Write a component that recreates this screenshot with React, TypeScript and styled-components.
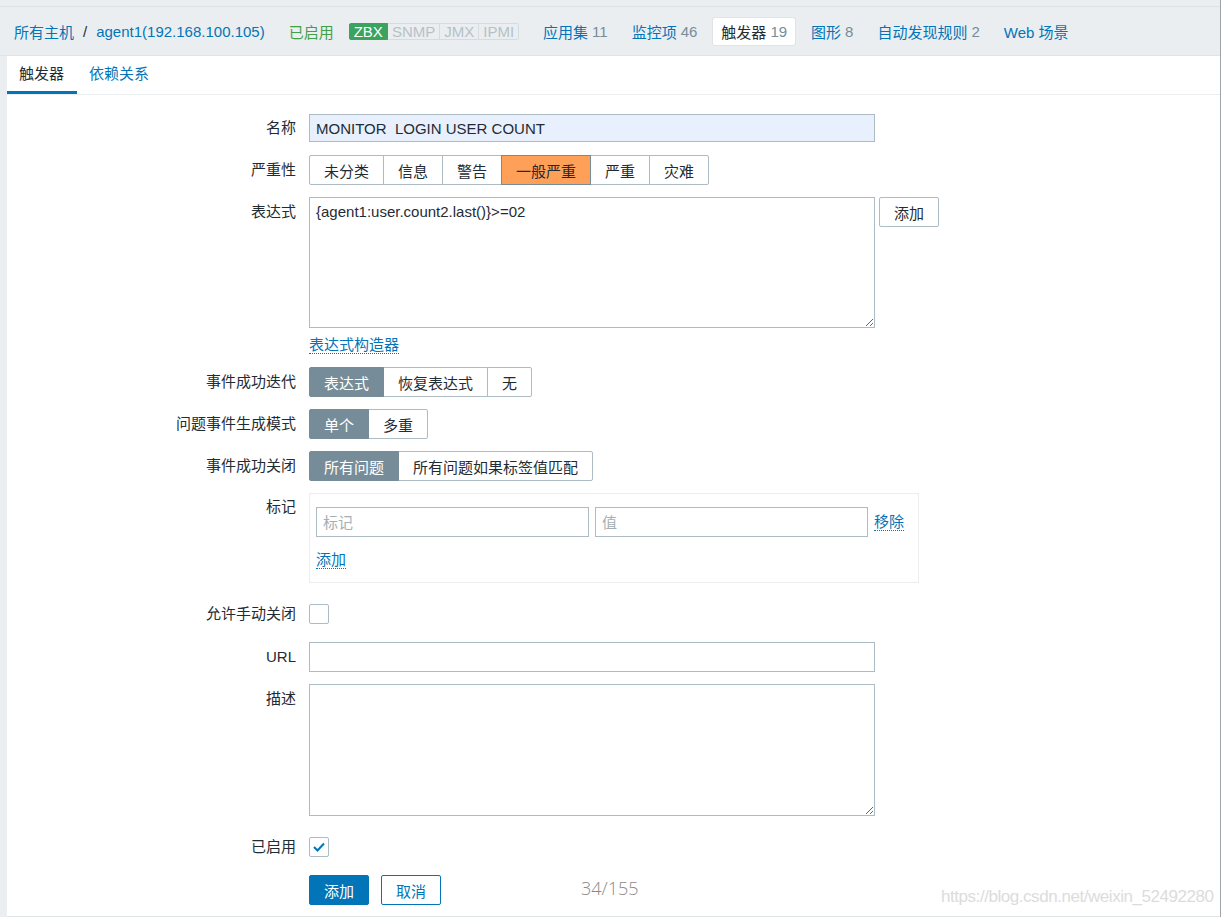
import styled, { createGlobalStyle } from 'styled-components';

const COLORS = {
  bg: '#ebeef0',
  text: '#1f2c33',
  link: '#0275b8',
  muted: '#768d99',
  border: '#acbbc4',
  light: '#dfe4e7',
  green: '#429e47',
  orange: '#ffa059',
};

const GlobalStyle = createGlobalStyle`
  html, body {
    margin: 0;
    padding: 0;
    background: ${COLORS.bg};
  }
  body {
    font-family: "Liberation Sans", "Noto Sans CJK SC", sans-serif;
    font-size: 15px;
    color: ${COLORS.text};
  }
`;

const Page = styled.div`
  position: relative;
  width: 1221px;
  height: 917px;
  box-sizing: border-box;
  background: ${COLORS.bg};
  border-right: 1px solid #9ea5aa;
  overflow: hidden;
`;

const Header = styled.div`
  display: flex;
  align-items: center;
  height: 48px;
  margin-top: 6px;
  padding-left: 14px;
  border-top: 1px solid #dde2e5;
  border-bottom: 1px solid ${COLORS.light};
  white-space: nowrap;
`;

const Crumb = styled.a`
  color: ${COLORS.link};
  text-decoration: none;
`;

const Sep = styled.span`
  margin: 0 9px;
  color: ${COLORS.text};
`;

const Status = styled.span`
  color: ${COLORS.green};
  margin-left: 24px;
`;

const Badges = styled.div`
  display: flex;
  margin-left: 15px;
  margin-right: 16px;
  height: 17px;
`;

const Badge = styled.span<{ $on?: boolean }>`
  display: flex;
  align-items: center;
  padding: 0 4px;
  line-height: 15px;
  border: 1px solid ${(p) => (p.$on ? '#3aa35d' : '#d5dce0')};
  border-left-width: ${(p) => (p.$on ? '1px' : '0')};
  background: ${(p) => (p.$on ? '#3aa35d' : COLORS.bg)};
  color: ${(p) => (p.$on ? '#fff' : '#b6c1c7')};
  border-radius: ${(p) => (p.$on ? '2px 0 0 2px' : '0')};
  &:last-child {
    border-radius: 0 2px 2px 0;
  }
`;

const Tabs = styled.div`
  display: flex;
  gap: 8px;
`;

const Tab = styled.a<{ $active?: boolean }>`
  display: flex;
  align-items: center;
  height: 27px;
  padding: 0 8px;
  border-radius: 2px;
  text-decoration: none;
  color: ${(p) => (p.$active ? COLORS.text : COLORS.link)};
  background: ${(p) => (p.$active ? '#fff' : 'transparent')};
  box-shadow: ${(p) => (p.$active ? `0 0 0 1px ${COLORS.light}` : 'none')};
`;

const Count = styled.span`
  color: ${COLORS.muted};
  margin-left: 4px;
`;

const Panel = styled.div`
  margin-left: 7px;
  height: 860px;
  background: #fff;
  border-bottom: 1px solid #dfe4e7;
`;

const SubTabs = styled.div`
  display: flex;
  height: 38px;
  border-bottom: 1px solid ${COLORS.bg};
`;

const SubTab = styled.a<{ $active?: boolean }>`
  display: flex;
  align-items: center;
  padding: 0 13px 2px 12px;
  text-decoration: none;
  color: ${(p) => (p.$active ? COLORS.text : COLORS.link)};
  border-bottom: 3px solid ${(p) => (p.$active ? COLORS.link : 'transparent')};
  box-sizing: border-box;
`;

const Form = styled.div`
  display: flex;
  flex-direction: column;
  gap: 12px;
  padding-top: 19px;
`;

const Row = styled.div<{ $check?: boolean; $extra?: number }>`
  display: grid;
  grid-template-columns: 289px auto;
  column-gap: 13px;
  align-items: ${(p) => (p.$check ? 'center' : 'start')};
  padding: ${(p) => (p.$check ? '9px 0 6px' : '0')};
  margin-bottom: ${(p) => p.$extra ?? 0}px;
`;

const Label = styled.div<{ $h?: number }>`
  text-align: right;
  line-height: ${(p) => p.$h ?? 30}px;
  white-space: nowrap;
`;

const Field = styled.div`
  display: flex;
  align-items: flex-start;
  gap: 4px;
`;

const Column = styled.div`
  display: flex;
  flex-direction: column;
  align-items: flex-start;
`;

const TextInput = styled.input<{ $w?: number; $fill?: boolean }>`
  box-sizing: border-box;
  width: ${(p) => p.$w ?? 566}px;
  height: ${(p) => (p.$fill ? 28 : 30)}px;
  padding: 0 6px;
  margin: 0;
  border: 1px solid ${COLORS.border};
  background: ${(p) => (p.$fill ? '#e8f0fe' : '#fff')};
  font: inherit;
  color: ${COLORS.text};
  outline: none;
  &::placeholder {
    color: #a4afb5;
  }
`;

const TextArea = styled.textarea<{ $h?: number }>`
  box-sizing: border-box;
  width: 566px;
  height: ${(p) => p.$h ?? 131}px;
  margin: 0;
  padding: 5px 6px;
  border: 1px solid ${COLORS.border};
  font: inherit;
  color: ${COLORS.text};
  outline: none;
  resize: both;
  display: block;
`;

const Segments = styled.div`
  display: flex;
  height: 30px;
`;

const Segment = styled.span<{ $sel?: 'grey' | 'orange' }>`
  display: flex;
  align-items: center;
  padding: 0 14px;
  border: 1px solid ${(p) => (p.$sel ? COLORS.muted : COLORS.border)};
  margin-left: -1px;
  background: ${(p) =>
    p.$sel === 'grey' ? COLORS.muted : p.$sel === 'orange' ? COLORS.orange : '#fff'};
  color: ${(p) => (p.$sel === 'grey' ? '#fff' : COLORS.text)};
  position: relative;
  z-index: ${(p) => (p.$sel ? 1 : 0)};
  &:first-child {
    margin-left: 0;
    border-radius: 2px 0 0 2px;
  }
  &:last-child {
    border-radius: 0 2px 2px 0;
  }
`;

const Button = styled.button<{ $primary?: boolean; $outline?: boolean }>`
  box-sizing: border-box;
  height: 30px;
  padding: 0 14px;
  border-radius: 2px;
  font: inherit;
  cursor: pointer;
  border: 1px solid ${(p) => (p.$primary || p.$outline ? COLORS.link : COLORS.border)};
  background: ${(p) => (p.$primary ? COLORS.link : '#fff')};
  color: ${(p) => (p.$primary ? '#fff' : p.$outline ? COLORS.link : COLORS.text)};
`;

const DottedLink = styled.a`
  color: ${COLORS.link};
  text-decoration: none;
  border-bottom: 1px dotted ${COLORS.link};
  line-height: 17px;
`;

const BuilderLink = styled(DottedLink)`
  margin: 8px 0 1px;
`;

const TagBox = styled.div`
  box-sizing: border-box;
  width: 610px;
  height: 90px;
  padding: 13px 6px 0;
  border: 1px solid ${COLORS.bg};
  display: flex;
  flex-direction: column;
  align-items: flex-start;
  gap: 14px;
`;

const TagRow = styled.div`
  display: flex;
  align-items: center;
  gap: 6px;
`;

const Check = styled.span`
  box-sizing: border-box;
  display: flex;
  align-items: center;
  justify-content: center;
  width: 20px;
  height: 20px;
  border: 1px solid ${COLORS.border};
  border-radius: 2px;
  background: #fff;
`;

const Actions = styled.div`
  display: flex;
  gap: 12px;
`;

const PageCount = styled.div`
  position: absolute;
  left: 581px;
  top: 876px;
  font-family: "Open Sans", "Noto Sans", sans-serif;
  font-size: 18px;
  font-weight: 300;
  color: #8a8a8a;
`;

const Watermark = styled.div`
  position: absolute;
  left: 941px;
  top: 887px;
  font-family: "Liberation Sans", sans-serif;
  font-size: 17px;
  color: #dcdcdc;
  letter-spacing: -0.45px;
`;

const severities = ['未分类', '信息', '警告', '一般严重', '严重', '灾难'];

function CheckMark() {
  return (
    <svg width="14" height="12" viewBox="0 0 14 12">
      <polyline points="2,6 5.5,9.5 12,2.5" fill="none" stroke={COLORS.link} strokeWidth="2" />
    </svg>
  );
}

export default function App() {
  return (
    <Page>
      <GlobalStyle />
      <Header>
        <Crumb>所有主机</Crumb>
        <Sep>/</Sep>
        <Crumb>agent1(192.168.100.105)</Crumb>
        <Status>已启用</Status>
        <Badges>
          <Badge $on>ZBX</Badge>
          <Badge>SNMP</Badge>
          <Badge>JMX</Badge>
          <Badge>IPMI</Badge>
        </Badges>
        <Tabs>
          <Tab>
            应用集<Count>11</Count>
          </Tab>
          <Tab>
            监控项<Count>46</Count>
          </Tab>
          <Tab $active>
            触发器<Count>19</Count>
          </Tab>
          <Tab>
            图形<Count>8</Count>
          </Tab>
          <Tab>
            自动发现规则<Count>2</Count>
          </Tab>
          <Tab>Web 场景</Tab>
        </Tabs>
      </Header>

      <Panel>
        <SubTabs>
          <SubTab $active>触发器</SubTab>
          <SubTab>依赖关系</SubTab>
        </SubTabs>

        <Form>
          <Row $extra={1}>
            <Label $h={28}>名称</Label>
            <TextInput $fill defaultValue="MONITOR  LOGIN USER COUNT" />
          </Row>

          <Row>
            <Label>严重性</Label>
            <Segments>
              {severities.map((s) => (
                <Segment key={s} $sel={s === '一般严重' ? 'orange' : undefined}>
                  {s}
                </Segment>
              ))}
            </Segments>
          </Row>

          <Row>
            <Label>表达式</Label>
            <Column>
              <Field>
                <TextArea defaultValue="{agent1:user.count2.last()}>=02" />
                <Button>添加</Button>
              </Field>
              <BuilderLink>表达式构造器</BuilderLink>
            </Column>
          </Row>

          <Row>
            <Label>事件成功迭代</Label>
            <Segments>
              <Segment $sel="grey">表达式</Segment>
              <Segment>恢复表达式</Segment>
              <Segment>无</Segment>
            </Segments>
          </Row>

          <Row>
            <Label>问题事件生成模式</Label>
            <Segments>
              <Segment $sel="grey">单个</Segment>
              <Segment>多重</Segment>
            </Segments>
          </Row>

          <Row>
            <Label>事件成功关闭</Label>
            <Segments>
              <Segment $sel="grey">所有问题</Segment>
              <Segment>所有问题如果标签值匹配</Segment>
            </Segments>
          </Row>

          <Row>
            <Label $h={28}>标记</Label>
            <TagBox>
              <TagRow>
                <TextInput $w={273} placeholder="标记" />
                <TextInput $w={273} placeholder="值" />
                <DottedLink>移除</DottedLink>
              </TagRow>
              <DottedLink>添加</DottedLink>
            </TagBox>
          </Row>

          <Row $check>
            <Label $h={20}>允许手动关闭</Label>
            <Check />
          </Row>

          <Row>
            <Label>URL</Label>
            <TextInput />
          </Row>

          <Row>
            <Label>描述</Label>
            <TextArea $h={132} />
          </Row>

          <Row $check>
            <Label $h={20}>已启用</Label>
            <Check>
              <CheckMark />
            </Check>
          </Row>

          <Row>
            <span />
            <Actions>
              <Button $primary>添加</Button>
              <Button $outline>取消</Button>
            </Actions>
          </Row>
        </Form>
      </Panel>

      <PageCount>34/155</PageCount>
      <Watermark>https://blog.csdn.net/weixin_52492280</Watermark>
    </Page>
  );
}
